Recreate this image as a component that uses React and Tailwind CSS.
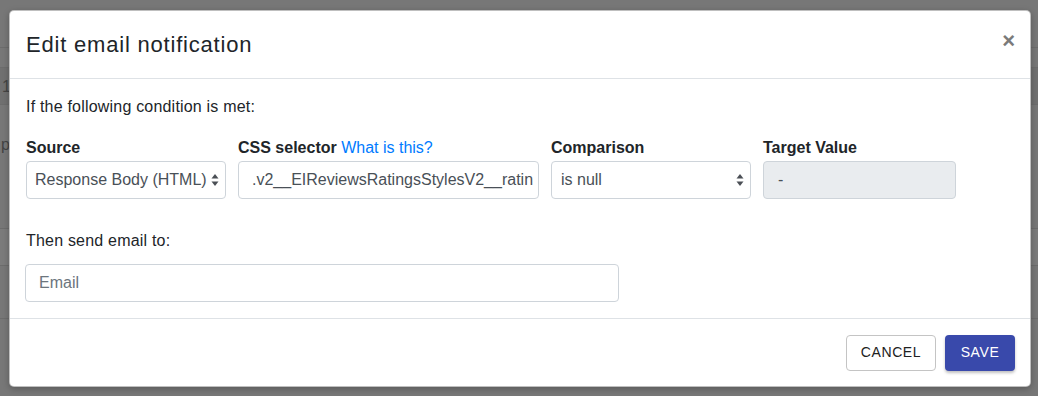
import React from "react";

function Carets() {
  return (
    <svg width="8" height="14" viewBox="0 0 8 14" className="shrink-0">
      <path d="M4 1 L7.5 5.5 L0.5 5.5 Z" fill="#4a4f55" />
      <path d="M4 13 L7.5 8.5 L0.5 8.5 Z" fill="#4a4f55" />
    </svg>
  );
}

export default function App() {
  const font = { fontFamily: '"Helvetica Neue", "Liberation Sans", Arial, sans-serif' };
  return (
    <div className="relative w-[1038px] h-[396px] overflow-hidden bg-[#777777]" style={font}>
      {/* underlying page (dimmed) */}
      <div className="flex flex-col">
        <div className="h-[47px]" />
        <div className="h-[20px] border-t border-[#6c6c6c]" />
        <div className="h-[37px] border-t border-[#6c6c6c] bg-[#707070] text-[#444] text-[16px] leading-[37px] pl-[2px]">1</div>
        <div className="h-[124px] border-t border-[#6c6c6c] text-[#444] text-[16px] pl-[1px] pt-[28px]">p</div>
        <div className="h-[37px] border-t border-[#6c6c6c] bg-[#7b7b7b]" />
        <div className="h-[53px] border-t border-[#6c6c6c]" />
        <div className="h-[78px] border-t border-[#6c6c6c]" />
      </div>

      {/* modal */}
      <div className="absolute left-[9px] top-[10px] w-[1022px] h-[377px] bg-white rounded-[5px] border border-[#5f5f5f]/40 flex flex-col shadow-[0_2px_6px_rgba(0,0,0,0.25)]">
        <div className="h-[68px] flex items-center justify-between px-[16px] border-b border-[#dee2e6]">
          <h5 className="text-[22px] leading-[28px] text-[#212529] font-normal tracking-[0.8px]">Edit email notification</h5>
          <button className="text-[#7a7a7a] text-[22px] font-bold leading-none mr-[-1px] mt-[-8px]">×</button>
        </div>
        <div className="flex flex-col px-[16px] pt-[16px] pb-[16px] text-[16px] leading-[24px] text-[#212529]">
          <p className="tracking-[0.2px]">If the following condition is met:</p>
          <div className="flex mt-[17px] gap-[12px]">
            <div className="flex flex-col w-[200px]">
              <label className="font-bold leading-[24px]">Source</label>
              <div className="mt-[1px] h-[38px] border border-[#ced4da] rounded-[4px] flex items-center justify-between pl-[8px] pr-[6px] text-[#495057]">
                <span>Response Body (HTML)</span>
                <Carets />
              </div>
            </div>
            <div className="flex flex-col w-[301px]">
              <label className="leading-[24px]"><span className="font-bold">CSS selector</span> <span className="text-[#007bff]">What is this?</span></label>
              <div className="mt-[1px] h-[38px] border border-[#ced4da] rounded-[4px] flex items-center px-[13px] text-[#495057] overflow-hidden whitespace-nowrap">
                <span>.v2__EIReviewsRatingsStylesV2__ratin</span>
              </div>
            </div>
            <div className="flex flex-col w-[200px]">
              <label className="font-bold leading-[24px]">Comparison</label>
              <div className="mt-[1px] h-[38px] border border-[#ced4da] rounded-[4px] flex items-center justify-between pl-[9px] pr-[6px] text-[#495057]">
                <span>is null</span>
                <Carets />
              </div>
            </div>
            <div className="flex flex-col w-[193px]">
              <label className="font-bold leading-[24px]">Target Value</label>
              <div className="mt-[1px] h-[38px] border border-[#ced4da] rounded-[4px] bg-[#e9ecef] flex items-center px-[14px] text-[#495057]">
                <span>-</span>
              </div>
            </div>
          </div>
          <p className="mt-[30px] tracking-[0.2px]">Then send email to:</p>
          <div className="mt-[11px] w-[594px] ml-[-1px] h-[38px] border border-[#ced4da] rounded-[4px] flex items-center px-[13px] text-[#6c757d]">
            Email
          </div>
        </div>
        <div className="flex-1 border-t border-[#dee2e6] flex items-center justify-end gap-[9px] px-[15px]">
          <button className="h-[36px] w-[90px] border border-[#c4c4c4] rounded-[4px] text-[14px] tracking-[0.6px] text-[#212121] bg-white">CANCEL</button>
          <button className="h-[36px] w-[70px] rounded-[4px] text-[14px] tracking-[0.6px] text-white bg-[#3949ab] shadow-[0_2px_3px_rgba(0,0,0,0.25)]">SAVE</button>
        </div>
      </div>
    </div>
  );
}
